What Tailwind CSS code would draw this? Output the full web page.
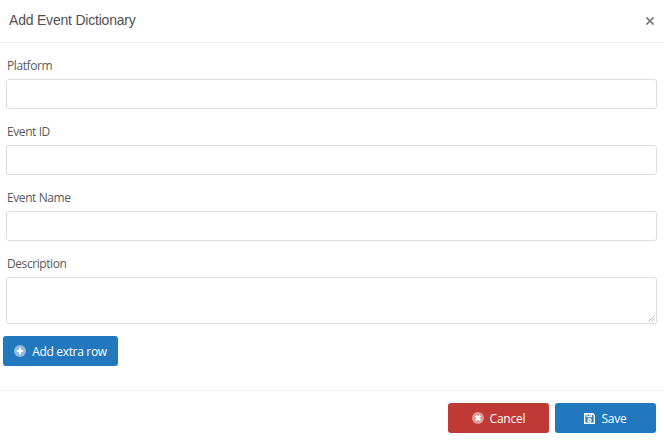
<!DOCTYPE html>
<html lang="en">
<head>
  <meta charset="UTF-8">
  <meta name="viewport" content="width=device-width, initial-scale=1.0">
  <title>Add Event Dictionary</title>
  <script src="https://cdn.jsdelivr.net/npm/@tailwindcss/browser@4"></script>
</head>
<body class="bg-white h-screen overflow-hidden font-['Open_Sans','Noto_Sans',sans-serif] text-xs tracking-[-0.32px] text-[#58595b]">
  <div class="flex flex-col h-[442px]">
    <!-- Header -->
    <div class="flex items-center justify-between h-[43px] shrink-0 pl-[9px] pr-[10px] pb-[3px] border-b border-[#efefef]">
      <h1 class="font-['Liberation_Sans',Arial,sans-serif] text-sm leading-5 tracking-[-0.21px] text-[#505050]">Add Event Dictionary</h1>
      <button type="button" aria-label="Close" class="mt-[3px] text-[#777777]">
        <svg class="block w-2 h-2" viewBox="0 0 8 8" fill="none" stroke="currentColor" stroke-width="1.6"><path d="M.4.4l7.2 7.2M7.6.4L.4 7.6"/></svg>
      </button>
    </div>

    <!-- Form -->
    <form class="pt-3 pl-1.5 pr-[7px]">
      <div class="mb-3">
        <label for="platform" class="block h-5 mb-1 pl-px pt-px leading-5 tracking-[-0.42px]">Platform</label>
        <input type="text" id="platform" class="block w-full h-[30px] px-2 border border-[#dcdddf] rounded-[3px] outline-none">
      </div>
      <div class="mb-3">
        <label for="eventId" class="block h-5 mb-1 pl-px pt-px leading-5 tracking-[-0.42px]">Event ID</label>
        <input type="text" id="eventId" class="block w-full h-[30px] px-2 border border-[#dcdddf] rounded-[3px] outline-none">
      </div>
      <div class="mb-3">
        <label for="eventName" class="block h-5 mb-1 pl-px pt-px leading-5 tracking-[-0.42px]">Event Name</label>
        <input type="text" id="eventName" class="block w-full h-[30px] px-2 border border-[#dcdddf] rounded-[3px] outline-none">
      </div>
      <div class="relative mb-3">
        <label for="description" class="block h-5 mb-1 pl-px pt-px leading-5 tracking-[-0.42px]">Description</label>
        <textarea id="description" class="block w-full h-[47px] px-2 border border-[#dcdddf] rounded-[3px] outline-none resize-none"></textarea>
        <!-- resize grip -->
        <svg class="absolute right-[2px] bottom-[2px] w-[7px] h-[7px]" viewBox="0 0 7 7" fill="none" stroke="#b5b5b5" stroke-width=".9"><path d="M.5 6.5l6-6M3.5 6.5l3-3"/></svg>
      </div>
      <button type="button" class="-ml-[3px] flex items-center justify-center gap-1.5 w-[115px] h-[30px] pt-px bg-[#2178bf] text-white font-medium rounded-[3px]">
        <svg class="w-3 h-3 -mt-px" viewBox="0 0 12 12"><circle cx="6" cy="6" r="6" fill="#fff" fill-opacity=".5"/><path d="M6 2.8v6.4M2.8 6h6.4" stroke="#fff" stroke-width="2"/></svg>
        <span>Add extra row</span>
      </button>
    </form>

    <!-- Footer -->
    <div class="mt-auto flex justify-end gap-1.5 h-[52px] pt-3 pr-2 border-t border-[#efefef]">
      <button type="button" class="flex items-center justify-center gap-1.5 w-[101px] h-[30px] pt-px bg-[#bf3935] text-white font-medium rounded-[3px]">
        <svg class="w-3 h-3 -mt-px" viewBox="0 0 12 12"><circle cx="6" cy="6" r="6" fill="#fff" fill-opacity=".5"/><path d="M3.8 3.8l4.4 4.4M8.2 3.8L3.8 8.2" stroke="#fff" stroke-width="2.2"/></svg>
        <span class="tracking-[-0.2px]">Cancel</span>
      </button>
      <button type="button" class="flex items-center justify-center gap-1.5 w-[101px] h-[30px] pt-px bg-[#2178bf] text-white font-medium rounded-[3px]">
        <svg class="w-[11px] h-[11px] -mt-px" viewBox="0 0 11 11" fill="none" stroke="#fff"><path d="M.7.7h8l1.6 1.6v8H.7z" stroke-width="1.4"/><path d="M3 .8v2.9h4.6V.8M6 1v2" stroke-width="1.2"/><circle cx="5.5" cy="7.2" r="1.5" stroke-width="1.4"/></svg>
        <span class="tracking-[-0.2px]">Save</span>
      </button>
    </div>
  </div>
</body>
</html>
